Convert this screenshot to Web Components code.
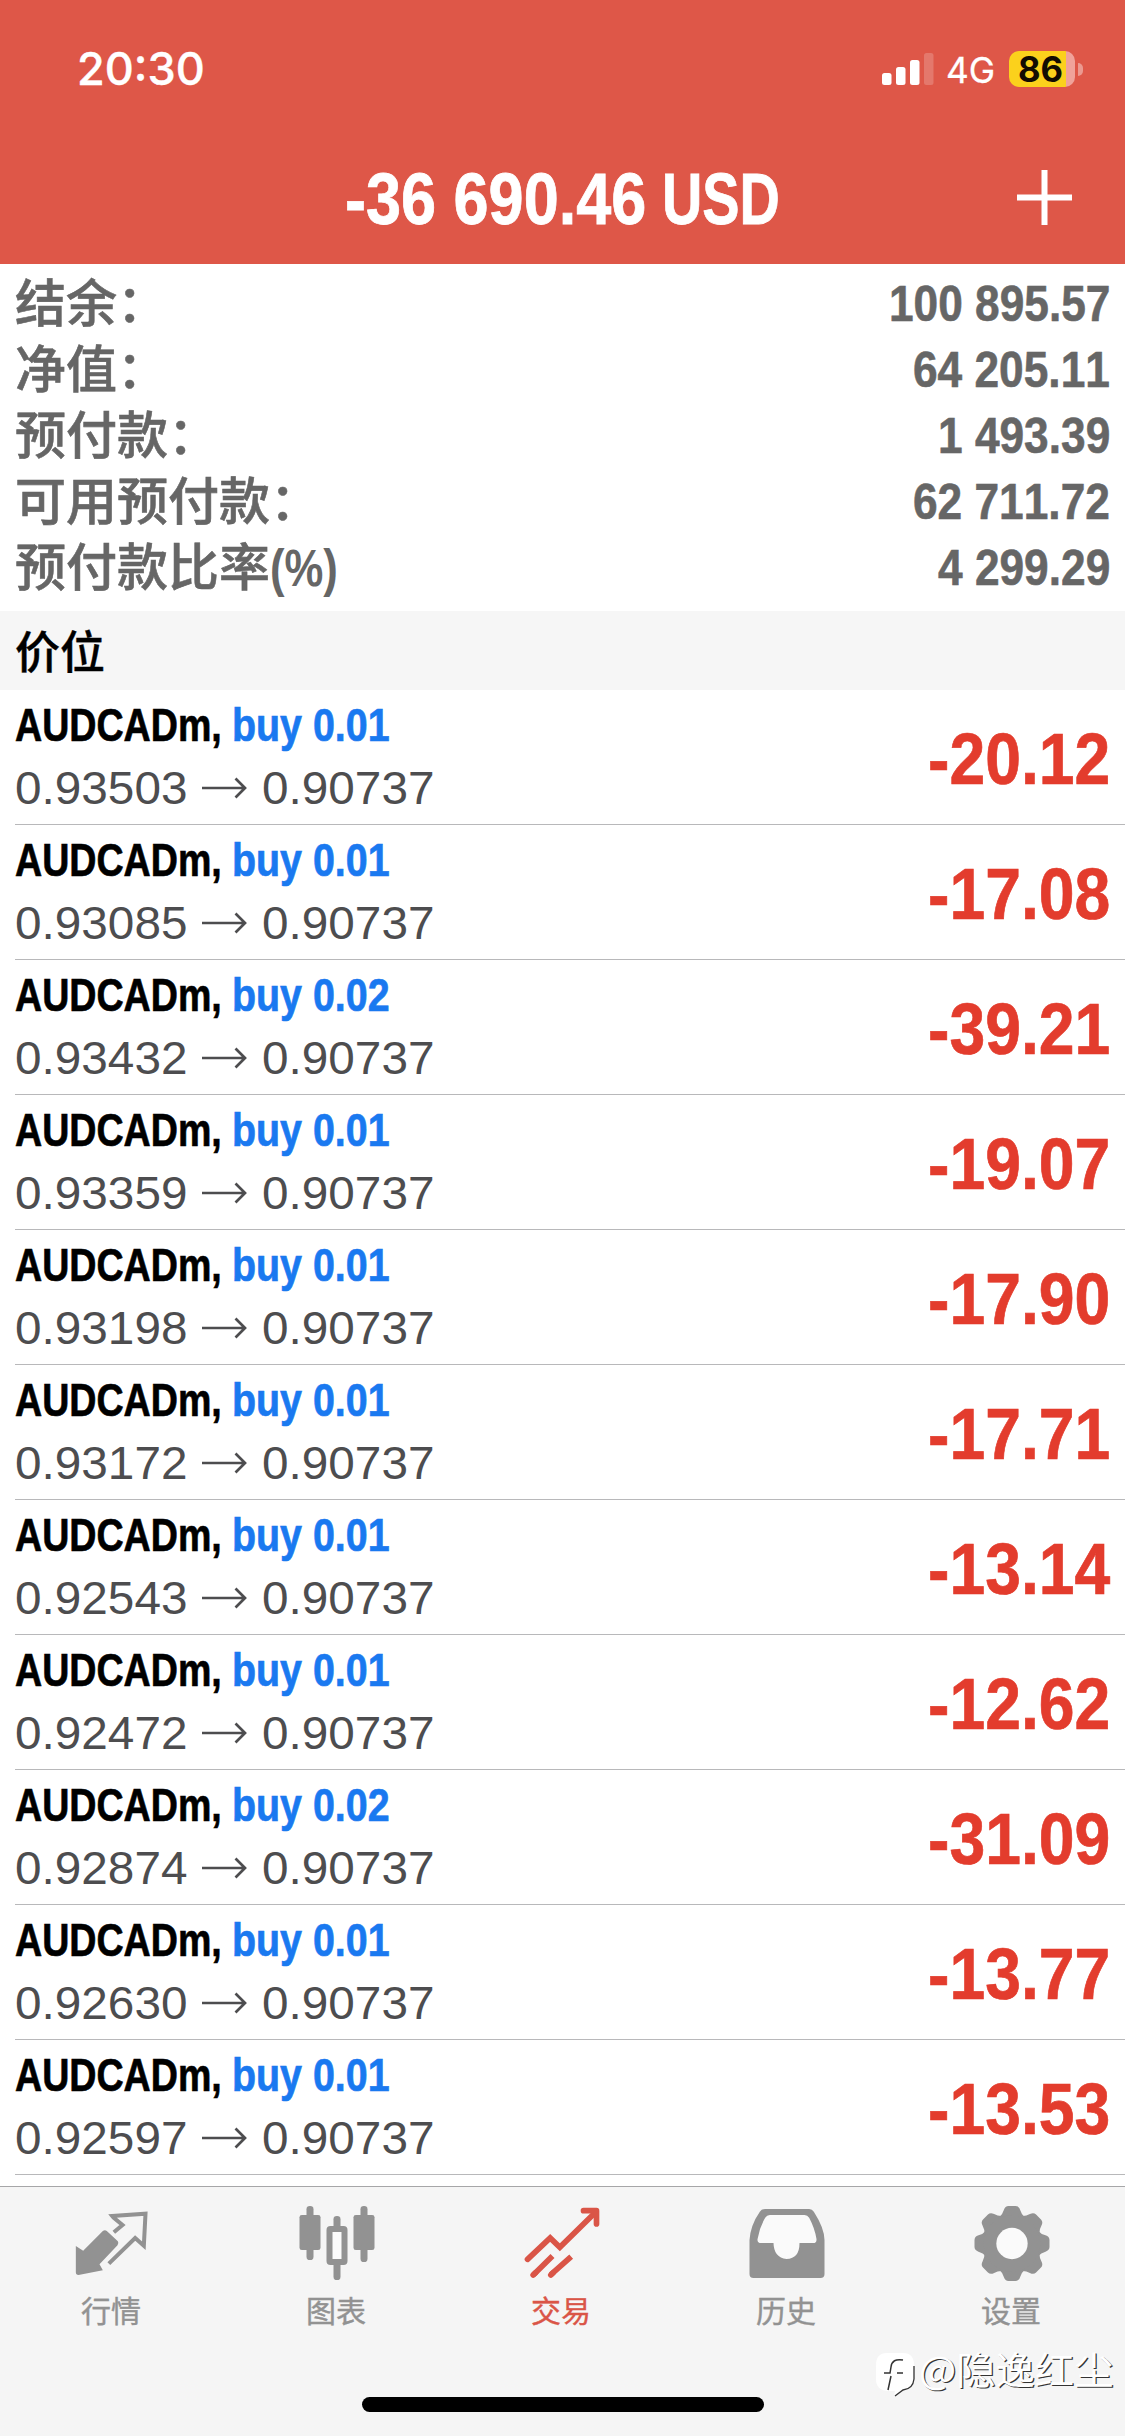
<!DOCTYPE html>
<html lang="zh-CN">
<head>
<meta charset="utf-8">
<title>交易</title>
<style>
html,body{margin:0;padding:0;background:#fff}
body{width:1125px;height:2436px;overflow:hidden;font-family:"Liberation Sans","Noto Sans CJK SC",sans-serif;-webkit-font-smoothing:antialiased}
</style>
</head>
<body>
<trade-app></trade-app>
<script>
/* Text squeezed horizontally by the factor in the "k" attribute; the host keeps the squeezed width. */
class CondensedText extends HTMLElement{
  connectedCallback(){
    this.attachShadow({mode:'open'}).innerHTML=`<style>
      :host{display:block;flex:none;white-space:pre;font-kerning:none}
      span{display:inline-block;transform-origin:0 50%}
    </style><span><slot></slot></span>`;
    const s=this.shadowRoot.querySelector('span'),k=+this.getAttribute('k')||1;
    this.style.width=(s.getBoundingClientRect().width*k)+'px';
    s.style.transform=`scaleX(${k})`;
  }
}

class StatusBar extends HTMLElement{
  connectedCallback(){
    this.attachShadow({mode:'open'}).innerHTML=`<style>
      :host{display:flex;justify-content:space-between;align-items:center;height:138px;padding:0 42px 0 77px;color:#fff;font-family:Inter,sans-serif}
      .time{font-size:45px;font-weight:500;line-height:54px;-webkit-text-stroke:.4px #fff}
      .right{display:flex;align-items:center}
      .net{font-size:36px;line-height:44px;margin:2px 14px 0 12px;-webkit-text-stroke:.3px #fff}
      .bat{display:flex;align-items:center}
      .cell{box-sizing:border-box;width:66px;height:36px;border-radius:10px;background:linear-gradient(90deg,#fbd11c 57px,#f0a29a 57px);color:#120c02;font-size:35px;font-weight:700;line-height:36px;padding-left:9px}
      .nub{width:5px;height:13px;margin-left:3px;border-radius:0 6px 6px 0;background:#eb9990}
    </style>
    <condensed-text class="time" k="1.0">20:30</condensed-text>
    <div class="right">
      <svg width="52" height="34" viewBox="0 0 52 34"><g fill="#fff"><rect y="21" width="9.5" height="12" rx="2.5"/><rect x="14" y="15" width="9.5" height="18" rx="2.5"/><rect x="28" y="8" width="9.5" height="25" rx="2.5"/><rect x="42" y="1" width="9.5" height="32" rx="2.5" opacity=".2"/></g></svg>
      <condensed-text class="net" k="0.98">4G</condensed-text>
      <div class="bat"><div class="cell"><condensed-text k="0.99">86</condensed-text></div><div class="nub"></div></div>
    </div>`;
  }
}

class NavHeader extends HTMLElement{
  connectedCallback(){
    this.attachShadow({mode:'open'}).innerHTML=`<style>
      :host{box-sizing:border-box;display:grid;grid-template-columns:1fr auto 1fr;align-items:center;height:126px;padding-bottom:8px;color:#fff}
      .t{grid-column:2;display:flex;gap:16px;font-size:72px;font-weight:700;line-height:84px;padding-top:3px;-webkit-text-stroke:.8px #fff}
      svg{justify-self:end;margin-right:53px}
    </style>
    <div class="t"><condensed-text k="0.875">${this.getAttribute('amount')}</condensed-text><condensed-text k="0.775">${this.getAttribute('currency')}</condensed-text></div>
    <svg width="55" height="55" viewBox="0 0 55 55"><path d="M0 27.5H55M27.5 0V55" stroke="#fff" stroke-width="6"/></svg>`;
  }
}

class AccountLine extends HTMLElement{
  connectedCallback(){
    this.attachShadow({mode:'open'}).innerHTML=`<style>
      :host{display:flex;justify-content:space-between;align-items:center;height:66px;color:#666;font-weight:700}
      .l{display:flex;font-weight:500;font-size:51px;line-height:66px;padding-top:2px;-webkit-text-stroke:.6px #666}
      .u{font-weight:700;-webkit-text-stroke:0}
      .v{font-size:50px;line-height:66px;-webkit-text-stroke:.6px #666}
    </style>
    <div class="l"><span>${this.getAttribute('label')}</span>${this.hasAttribute('unit')?`<condensed-text class="u" k="0.855">${this.getAttribute('unit')}</condensed-text>`:''}</div>
    <condensed-text class="v" k="0.885">${this.getAttribute('value')}</condensed-text>`;
  }
}

class SectionTitle extends HTMLElement{
  connectedCallback(){
    this.attachShadow({mode:'open'}).innerHTML=`<style>
      :host{box-sizing:border-box;display:flex;align-items:flex-start;height:79px;padding-left:15px;background:#f6f6f6;color:#000;font:500 45px/77px "Noto Sans CJK SC",sans-serif;-webkit-text-stroke:.4px #000}
    </style><slot></slot>`;
  }
}

class PositionRow extends HTMLElement{
  connectedCallback(){
    const a=n=>this.getAttribute(n);
    this.attachShadow({mode:'open'}).innerHTML=`<style>
      :host{box-sizing:border-box;display:flex;justify-content:space-between;align-items:center;height:135px;margin-left:15px;padding-right:15px;border-bottom:1px solid #b8b8ba}
      .info{display:flex;flex-direction:column;padding-bottom:3px}
      .line{display:flex;align-items:center;height:63px}
      .top{font-size:47px;font-weight:700;color:#000;gap:10px;-webkit-text-stroke:.7px currentColor}
      .buy{color:#1a79f0}
      .px{font-size:47px;color:#4d4d4f}
      svg{margin:2px 15px 0 15px}
      .pl{font-size:72px;font-weight:700;color:#e33c2d;line-height:80px;padding-top:4px;-webkit-text-stroke:.7px #e33c2d}
    </style>
    <div class="info">
      <div class="line top"><condensed-text k="0.8">${a('symbol')},</condensed-text><condensed-text class="buy" k="0.838">${a('side')}</condensed-text></div>
      <div class="line px"><condensed-text k="1.015">${a('open')}</condensed-text>
        <svg width="45" height="22" viewBox="0 0 45 22" fill="none" stroke="#4d4d4f" stroke-width="2.7"><path d="M0 11H43M33.500 1.500L43 11L33.500 20.500"/></svg>
        <condensed-text k="1.015">${a('now')}</condensed-text></div>
    </div>
    <condensed-text class="pl" k="0.893">${a('profit')}</condensed-text>`;
  }
}

const ICONS={
  quotes:['202.5','<path fill="currentColor" d="M226 258L248 272L307 213Q313 208 319 213L352 244Q356 250 351 256L297 313L307 331L234 345Q226 345 226 337Z"/><path fill="none" stroke="currentColor" stroke-width="12" d="M340 217L366 195L339 173L335 168L435 161L430 257L404 234L325 311"/>'],
  chart:['877.5','<g fill="currentColor"><rect x="897" y="165" width="63" height="105" rx="7"/><rect x="918" y="138" width="21" height="162" rx="10"/><rect x="1059" y="165" width="63" height="105" rx="7"/><rect x="1080" y="138" width="21" height="168" rx="10"/><rect x="999" y="168" width="21" height="40" rx="10"/><rect x="999" y="305" width="21" height="55" rx="10"/></g><rect x="987" y="207" width="45" height="99" rx="3" fill="#fbfbfb" stroke="currentColor" stroke-width="18"/>'],
  trade:['352.5','<g fill="none" stroke="currentColor" stroke-width="17"><path stroke-linecap="round" stroke-linejoin="miter" d="M381 298L449 234L478 262L585 157"/><path stroke-linecap="round" stroke-linejoin="round" d="M549 152H588V192"/><path d="M399 344L456 288M451 344L512 290"/><path stroke-linecap="round" d="M398 345L405 338M451 345L458 338"/></g>'],
  history:['1027.5','<path fill="currentColor" d="M1094 147H1226Q1235 147 1240 155Q1272 205 1272 240V342Q1272 354 1260 354H1059Q1047 354 1047 342V240Q1050 195 1078 155Q1084 147 1094 147Z"/><path fill="#fafafa" d="M1108 165H1212Q1221 165 1226 173Q1243 205 1248 237Q1249 249 1238 249H1197Q1197 296 1158 297Q1120 293 1119 249H1082Q1070 249 1071 238Q1076 205 1094 173Q1099 165 1108 165Z"/>'],
  settings:['502.5','']
};
/* Eight rounded cog teeth around a ring, centre (634.5, 250.5). */
(()=>{
  let g='';
  for(let i=0;i<8;i++)g+=`<path transform="rotate(${i*45} 634.5 250.5)" d="M596 172Q606 164 610 150Q614 138 624 138H645Q655 138 659 150Q663 164 673 172L660 210H609Z"/>`;
  ICONS.settings[1]=`<g fill="currentColor">${g}<circle cx="634.5" cy="250.5" r="85"/></g><circle cx="634.5" cy="250.500" r="47" fill="#fafafa"/>`;
})();

class TabItem extends HTMLElement{
  connectedCallback(){
    const [x,art]=ICONS[this.getAttribute('icon')];
    this.attachShadow({mode:'open'}).innerHTML=`<style>
      :host{display:flex;flex:1;flex-direction:column;align-items:center;color:#929292;font:400 30px/36px "Noto Sans CJK SC",sans-serif;-webkit-text-stroke:.4px currentColor}
      :host([active]){color:#da5547}
      svg{display:block;margin-top:13px}
      span{margin-top:5px;margin-right:3px}
    </style><svg width="90" height="86" viewBox="${x} 120 270 258">${art}</svg><span><slot></slot></span>`;
  }
}

class TabBar extends HTMLElement{
  connectedCallback(){
    this.attachShadow({mode:'open'}).innerHTML=`<style>
      :host{box-sizing:border-box;display:flex;flex-direction:column;height:250px;margin-top:11px;border-top:1px solid #a6a6a8;background:#f5f5f5}
      .tabs{display:flex;height:210px}
      .home{width:402px;height:15px;border-radius:8px;background:#000;align-self:center}
    </style><div class="tabs"><slot></slot></div><div class="home"></div>`;
  }
}

class WaterMark extends HTMLElement{
  connectedCallback(){
    this.attachShadow({mode:'open'}).innerHTML=`<style>
      :host{position:absolute;left:875px;top:2344px;display:flex;align-items:flex-start;color:#fff;font:400 38px/48px "Noto Sans CJK SC",sans-serif;text-shadow:1.2px 1.2px 0 #333}
      svg{margin:8px 4px 0 0}
    </style>
    <svg width="40" height="46" viewBox="0 0 40 46"><path d="M12 1H28Q39 1 39 13V27Q38 37 27 38L19 44L20 39H12Q1 38 1 27V13Q1 1 12 1Z" fill="#fff"/><path d="M39 14V27Q38 37 28 38L20 44" fill="none" stroke="#333" stroke-width="1.300"/><path d="M28 8Q17 6 16 15L15 21H9M16 24L13 38M22 21H28" fill="none" stroke="#333" stroke-width="1.500"/></svg>
    <condensed-text k="1.035"><slot></slot></condensed-text>`;
  }
}

class TradeApp extends HTMLElement{
  connectedCallback(){
    const rows=[['0.93503','0.01','-20.12'],['0.93085','0.01','-17.08'],['0.93432','0.02','-39.21'],['0.93359','0.01','-19.07'],['0.93198','0.01','-17.90'],['0.93172','0.01','-17.71'],['0.92543','0.01','-13.14'],['0.92472','0.01','-12.62'],['0.92874','0.02','-31.09'],['0.92630','0.01','-13.77'],['0.92597','0.01','-13.53']];
    this.attachShadow({mode:'open'}).innerHTML=`<style>
      :host{display:flex;flex-direction:column;width:1125px;height:2436px;background:#fff}
      header{height:264px;background:#de5748}
      .account{box-sizing:border-box;height:348px;padding:7px 15px 0}
    </style>
    <header><status-bar></status-bar><nav-header amount="-36 690.46" currency="USD"></nav-header></header>
    <section class="account">
      <account-line label="结余：" value="100 895.57"></account-line>
      <account-line label="净值：" value="64 205.11"></account-line>
      <account-line label="预付款：" value="1 493.39"></account-line>
      <account-line label="可用预付款：" value="62 711.72"></account-line>
      <account-line label="预付款比率" unit="(%)" value="4 299.29"></account-line>
    </section>
    <section-title>价位</section-title>
    <main>${rows.map(r=>`<position-row symbol="AUDCADm" side="buy ${r[1]}" open="${r[0]}" now="0.90737" profit="${r[2]}"></position-row>`).join('')}</main>
    <tab-bar><tab-item icon="quotes">行情</tab-item><tab-item icon="chart">图表</tab-item><tab-item icon="trade" active>交易</tab-item><tab-item icon="history">历史</tab-item><tab-item icon="settings">设置</tab-item></tab-bar>
    <water-mark>@隐逸红尘</water-mark>`;
  }
}
[['condensed-text',CondensedText],['status-bar',StatusBar],['nav-header',NavHeader],['account-line',AccountLine],['section-title',SectionTitle],['position-row',PositionRow],['tab-item',TabItem],['tab-bar',TabBar],['water-mark',WaterMark],['trade-app',TradeApp]].forEach(([n,c])=>customElements.define(n,c));
</script>
</body>
</html>
